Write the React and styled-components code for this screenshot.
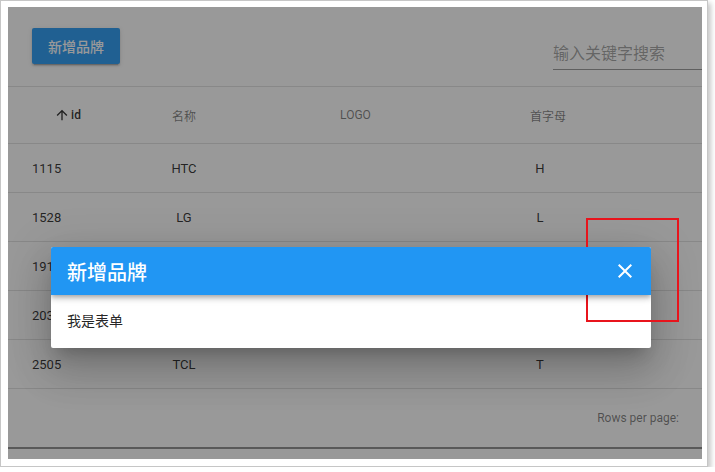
import styled, { createGlobalStyle } from "styled-components";

const GlobalStyle = createGlobalStyle`
  body {
    margin: 0;
    background: #fff;
  }
`;

const Frame = styled.div`
  position: relative;
  width: 708px;
  height: 467px;
  box-sizing: border-box;
  border: 1px solid #c6c6c6;
  padding: 6px 5px 6px 7px;
  background: #fff;
  box-shadow: 3px 3px 5px rgba(0, 0, 0, 0.22);
`;

const Shot = styled.div`
  position: relative;
  height: 452px;
  overflow: hidden;
  background: #fff;
  font-family: Roboto, "Noto Sans CJK SC", sans-serif;
  color: rgba(0, 0, 0, 0.87);
`;

const TopBar = styled.div`
  display: flex;
  align-items: flex-start;
  height: 80px;
  padding: 21px 0 0 24px;
  box-sizing: border-box;
  border-bottom: 1px solid #e0e0e0;
`;

const PrimaryButton = styled.button`
  height: 36px;
  padding: 0 16px;
  border: none;
  border-radius: 2px;
  background: #2196f3;
  color: #fff;
  font-family: inherit;
  font-size: 14px;
  font-weight: 500;
  box-shadow: 0 3px 1px -2px rgba(0, 0, 0, 0.2), 0 2px 2px 0 rgba(0, 0, 0, 0.14),
    0 1px 5px 0 rgba(0, 0, 0, 0.12);
`;

const Search = styled.div`
  margin: 16px 0 0 auto;
  width: 149px;
  padding-bottom: 5px;
  border-bottom: 1px solid rgba(0, 0, 0, 0.42);
  font-size: 16px;
  line-height: 20px;
  color: rgba(0, 0, 0, 0.4);
`;

const Row = styled.div`
  display: grid;
  grid-template-columns: 119px 114px 229px 156px 1fr;
  align-items: center;
  height: ${(p) => (p.$head ? 56 : 48)}px;
  border-bottom: 1px solid #e0e0e0;
  font-size: ${(p) => (p.$head ? 12 : 13)}px;
  color: ${(p) => (p.$head ? "rgba(0,0,0,0.54)" : "rgba(0,0,0,0.87)")};
`;

const Cell = styled.div`
  display: flex;
  align-items: center;
  justify-content: ${(p) => p.$align || "center"};
  padding-left: ${(p) => p.$pl || 0}px;
  padding-right: ${(p) => p.$pr || 0}px;
  color: ${(p) => (p.$active ? "rgba(0,0,0,0.87)" : "inherit")};
  font-weight: ${(p) => (p.$active ? 500 : 400)};
`;

const SortIcon = styled.svg`
  width: 16px;
  height: 16px;
  margin-right: 1px;
  fill: currentColor;
`;

const Footer = styled.div`
  display: flex;
  align-items: center;
  justify-content: flex-end;
  height: 58px;
  padding-right: 23px;
  border-bottom: 2px solid #8a8a8a;
  font-size: 12px;
  color: rgba(0, 0, 0, 0.54);
`;

const Overlay = styled.div`
  position: absolute;
  inset: 0;
  background: rgba(33, 33, 33, 0.46);
`;

const Dialog = styled.div`
  position: absolute;
  left: 43px;
  top: 240px;
  width: 600px;
  border-radius: 2px;
  overflow: hidden;
  background: #fff;
  box-shadow: 0 11px 15px -7px rgba(0, 0, 0, 0.2), 0 24px 38px 3px rgba(0, 0, 0, 0.14),
    0 9px 46px 8px rgba(0, 0, 0, 0.12);
`;

const DialogBar = styled.div`
  position: relative;
  z-index: 1;
  display: flex;
  align-items: center;
  height: 48px;
  padding: 0 14px 0 16px;
  background: #2196f3;
  color: #fff;
  box-shadow: 0 2px 4px -1px rgba(0, 0, 0, 0.2), 0 4px 5px 0 rgba(0, 0, 0, 0.14),
    0 1px 10px 0 rgba(0, 0, 0, 0.12);
`;

const DialogTitle = styled.div`
  flex: 1;
  font-size: 20px;
  font-weight: 500;
`;

const CloseIcon = styled.svg`
  width: 24px;
  height: 24px;
  fill: #fff;
`;

const DialogBody = styled.div`
  padding: 16px;
  font-size: 14px;
  line-height: 21px;
`;

const Marker = styled.div`
  position: absolute;
  left: 585px;
  top: 217px;
  width: 93px;
  height: 104px;
  box-sizing: border-box;
  border: 2px solid #e8141c;
`;

const brands = [
  { id: 1115, name: "HTC", letter: "H" },
  { id: 1528, name: "LG", letter: "L" },
  { id: 1912, name: "OPPO", letter: "O" },
  { id: 2032, name: "TCL", letter: "T" },
  { id: 2505, name: "TCL", letter: "T" },
];

function App() {
  return (
    <>
      <GlobalStyle />
      <Frame>
        <Shot>
          <TopBar>
            <PrimaryButton>新增品牌</PrimaryButton>
            <Search>输入关键字搜索</Search>
          </TopBar>
          <Row $head>
            <Cell $active>
              <SortIcon viewBox="0 0 24 24">
                <path d="M4 12l1.41 1.41L11 7.83V20h2V7.83l5.58 5.59L20 12l-8-8-8 8z" />
              </SortIcon>
              id
            </Cell>
            <Cell>名称</Cell>
            <Cell>LOGO</Cell>
            <Cell>首字母</Cell>
            <Cell />
          </Row>
          {brands.map((b) => (
            <Row key={b.id}>
              <Cell $align="flex-start" $pl={24}>{b.id}</Cell>
              <Cell>{b.name}</Cell>
              <Cell />
              <Cell $pr={16}>{b.letter}</Cell>
              <Cell />
            </Row>
          ))}
          <Footer>Rows per page:</Footer>
          <Overlay />
          <Dialog>
            <DialogBar>
              <DialogTitle>新增品牌</DialogTitle>
              <CloseIcon viewBox="0 0 24 24">
                <path d="M19 6.41L17.59 5 12 10.59 6.41 5 5 6.41 10.59 12 5 17.59 6.41 19 12 13.41 17.59 19 19 17.59 13.41 12z" />
              </CloseIcon>
            </DialogBar>
            <DialogBody>我是表单</DialogBody>
          </Dialog>
        </Shot>
        <Marker />
      </Frame>
    </>
  );
}

export default App;
